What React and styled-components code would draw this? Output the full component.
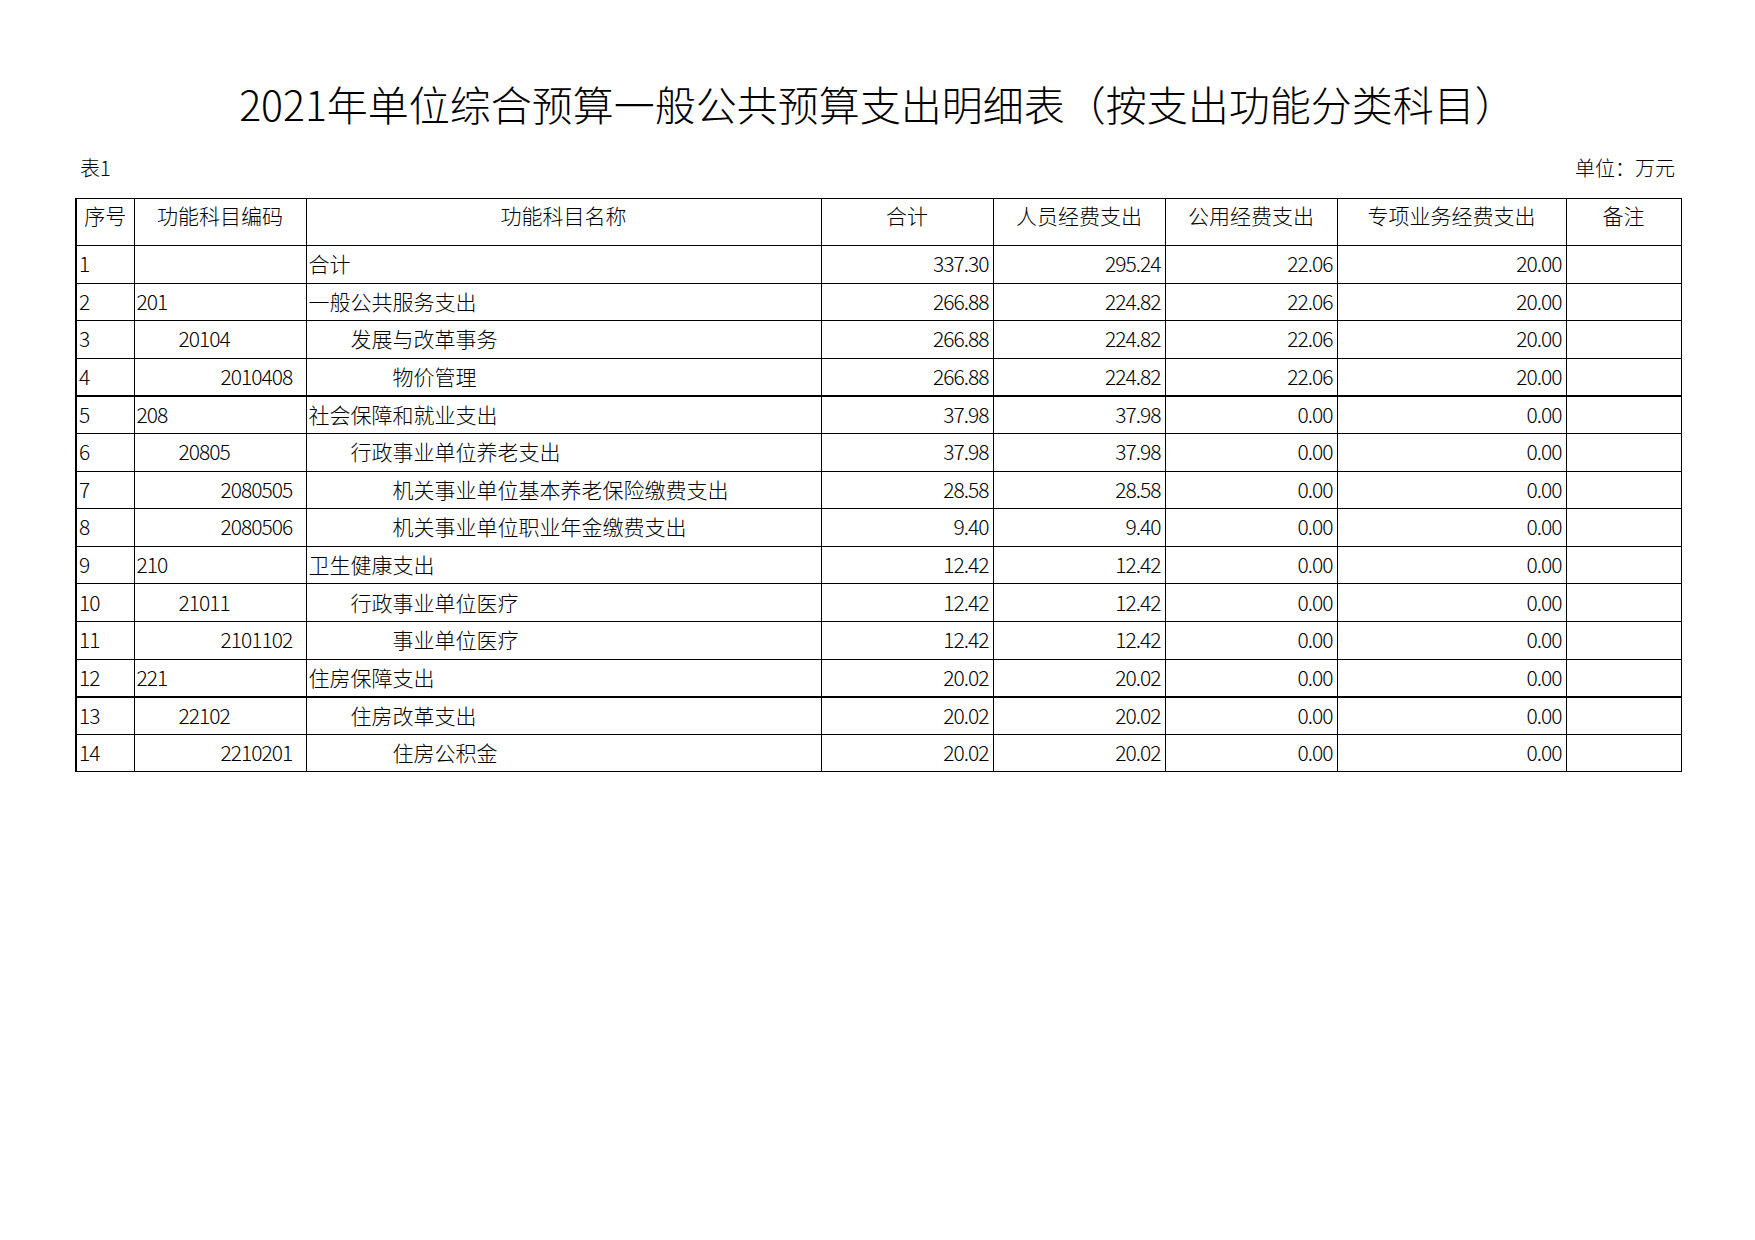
import React from "react";
import styled, { createGlobalStyle } from "styled-components";

const GlobalStyle = createGlobalStyle`
	html, body {
		margin: 0;
		padding: 0;
		background: #ffffff;
	}
	body {
		font-family: "Noto Sans CJK SC", "Noto Sans", sans-serif;
		font-weight: 300;
		color: #000000;
	}
`;

const columns = [
	{ key: "no", title: "序号", width: 58 },
	{ key: "code", title: "功能科目编码", width: 172 },
	{ key: "name", title: "功能科目名称", width: 515 },
	{ key: "total", title: "合计", width: 172 },
	{ key: "staff", title: "人员经费支出", width: 172 },
	{ key: "public", title: "公用经费支出", width: 172 },
	{ key: "special", title: "专项业务经费支出", width: 229 },
	{ key: "note", title: "备注", width: 115 },
];

// level: indent of the code / name columns
const rows = [
	{ no: 1, code: "", name: "合计", level: 1, values: ["337.30", "295.24", "22.06", "20.00"] },
	{ no: 2, code: "201", name: "一般公共服务支出", level: 1, values: ["266.88", "224.82", "22.06", "20.00"] },
	{ no: 3, code: "20104", name: "发展与改革事务", level: 2, values: ["266.88", "224.82", "22.06", "20.00"] },
	{ no: 4, code: "2010408", name: "物价管理", level: 3, values: ["266.88", "224.82", "22.06", "20.00"], thick: true },
	{ no: 5, code: "208", name: "社会保障和就业支出", level: 1, values: ["37.98", "37.98", "0.00", "0.00"] },
	{ no: 6, code: "20805", name: "行政事业单位养老支出", level: 2, values: ["37.98", "37.98", "0.00", "0.00"] },
	{ no: 7, code: "2080505", name: "机关事业单位基本养老保险缴费支出", level: 3, values: ["28.58", "28.58", "0.00", "0.00"] },
	{ no: 8, code: "2080506", name: "机关事业单位职业年金缴费支出", level: 3, values: ["9.40", "9.40", "0.00", "0.00"] },
	{ no: 9, code: "210", name: "卫生健康支出", level: 1, values: ["12.42", "12.42", "0.00", "0.00"] },
	{ no: 10, code: "21011", name: "行政事业单位医疗", level: 2, values: ["12.42", "12.42", "0.00", "0.00"] },
	{ no: 11, code: "2101102", name: "事业单位医疗", level: 3, values: ["12.42", "12.42", "0.00", "0.00"] },
	{ no: 12, code: "221", name: "住房保障支出", level: 1, values: ["20.02", "20.02", "0.00", "0.00"], thick: true },
	{ no: 13, code: "22102", name: "住房改革支出", level: 2, values: ["20.02", "20.02", "0.00", "0.00"] },
	{ no: 14, code: "2210201", name: "住房公积金", level: 3, values: ["20.02", "20.02", "0.00", "0.00"] },
];

function App() {
	return (
		<>
			<GlobalStyle />
			<Page>
				<Title>2021年单位综合预算一般公共预算支出明细表（按支出功能分类科目）</Title>

				<SubHeader>
					<span>表1</span>
					<span>单位：万元</span>
				</SubHeader>

				<Table>
					<colgroup>
						{columns.map((col) => (
							<col key={col.key} style={{ width: col.width }} />
						))}
					</colgroup>
					<thead>
						<tr>
							{columns.map((col) => (
								<HeadCell key={col.key}>{col.title}</HeadCell>
							))}
						</tr>
					</thead>
					<tbody>
						{rows.map((row) => (
							<Row key={row.no} $thick={row.thick}>
								<Cell $digits>{row.no}</Cell>
								<Cell $digits $indent={row.code ? row.level : 1}>
									{row.code}
								</Cell>
								<Cell $indent={row.level}>{row.name}</Cell>
								{row.values.map((v, i) => (
									<NumCell key={i} $digits>
										{v}
									</NumCell>
								))}
								<Cell />
							</Row>
						))}
					</tbody>
				</Table>
			</Page>
		</>
	);
}

export default App;

const Page = styled.div`
	width: 1755px;
	min-height: 1240px;
	box-sizing: border-box;
	padding: 75px 75px 0 75px;
	display: flex;
	flex-direction: column;
`;

const Title = styled.h1`
	margin: 0;
	font-size: 41px;
	line-height: 56px;
	font-weight: 300;
	text-align: center;
	white-space: nowrap;
`;

const SubHeader = styled.div`
	display: flex;
	justify-content: space-between;
	align-items: center;
	margin-top: 23px;
	padding: 0 5px 0 5px;
	font-size: 20px;
	line-height: 28px;
`;

const Table = styled.table`
	margin-top: 16px;
	width: 1605px;
	table-layout: fixed;
	border-collapse: collapse;
	border-left: 2px solid #000;
	font-size: 21px;
	line-height: 30px;
`;

const HeadCell = styled.th`
	height: 47px;
	box-sizing: border-box;
	padding: 1px 2px 0 2px;
	border: 1px solid #000;
	font-weight: 300;
	text-align: center;
	vertical-align: top;
	white-space: nowrap;
`;

const Row = styled.tr`
	height: 37.6px;

	td {
		border-bottom: ${(p) => (p.$thick ? "2px" : "1px")} solid #000;
	}
`;

const Cell = styled.td`
	border: 1px solid #000;
	padding: 0 2px 2px ${(p) => (p.$indent ? 2 + (p.$indent - 1) * 42 : 2)}px;
	text-align: left;
	vertical-align: middle;
	white-space: nowrap;
	overflow: hidden;
	letter-spacing: ${(p) => (p.$digits ? "-1px" : "0")};
`;

const NumCell = styled(Cell)`
	padding: 0 4px 2px 2px;
	text-align: right;
`;
